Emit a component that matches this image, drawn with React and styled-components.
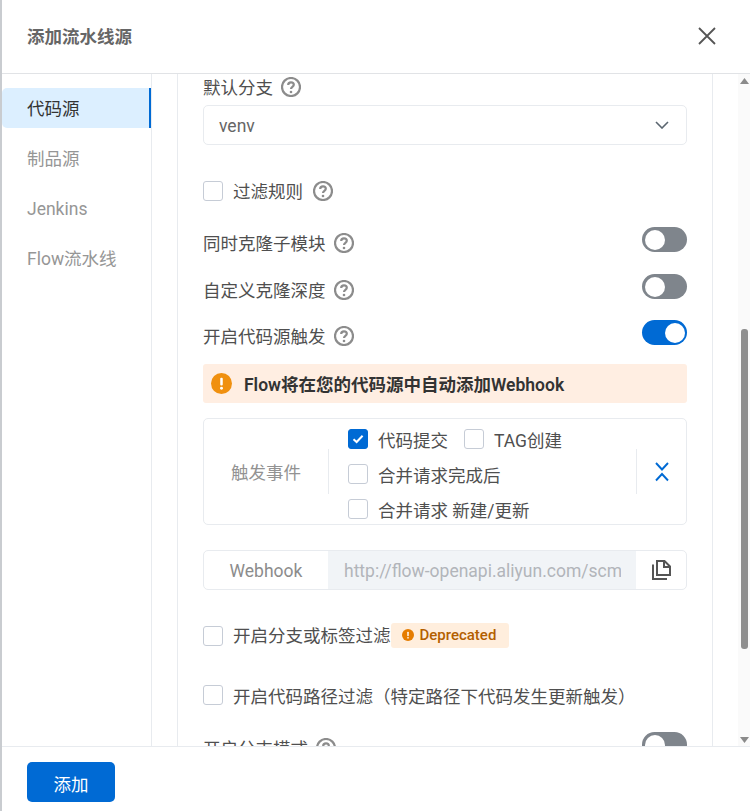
import React from "react";
import styled, { createGlobalStyle } from "styled-components";

const Global = createGlobalStyle`
  html, body { margin: 0; padding: 0; background: #fff; }
  body { font-family: Roboto, "Noto Sans CJK SC", sans-serif; font-size: 17.5px; color: #4f4f4f; }
  * { box-sizing: border-box; }
`;

const Page = styled.div`
  width: 750px; height: 811px; overflow: hidden; display: flex; flex-direction: column;
  border-left: 2px solid #c9ccd0; background: #fff;
`;
const Header = styled.header`
  flex: none; height: 74px; padding: 0 34px 1px 25px; border-bottom: 1px solid #e1e3e6;
  display: flex; align-items: center; justify-content: space-between;
`;
const Title = styled.h1`
  margin: 0; padding-top: 2px; font-size: 17.5px; line-height: 26px; font-weight: 700; color: #666;
`;
const Main = styled.div`flex: 1; min-height: 0; display: flex;`;
const Sidebar = styled.nav`
  flex: none; width: 150px; padding-top: 14px; border-right: 1px solid #e8ebef;
  display: flex; flex-direction: column; gap: 10px;
`;
const NavItem = styled.div`
  height: 40px; line-height: 42px; padding-left: 25px; border-radius: 5px 0 0 5px;
  color: ${p => (p.$active ? "#333" : "#969696")};
  background: ${p => (p.$active ? "#dcefff" : "transparent")};
  border-right: 2px solid ${p => (p.$active ? "#006ad4" : "transparent")};
`;
const Panel = styled.div`
  flex: none; width: 536px; margin: 0 25px; padding: 0 25px; overflow: hidden;
  border-left: 1px solid #e8ebef; border-right: 1px solid #e8ebef;
`;
const Scrollbar = styled.div`
  flex: none; width: 12px; background: #fafafa; padding: 4px 0 3px 0;
  display: flex; flex-direction: column; align-items: center;
`;
const Arrow = styled.svg`display: block; flex: none; width: 9px; height: 6px; fill: #8a8a8a;`;
const Thumb = styled.div`
  flex: none; width: 7px; height: 320px; margin-top: 245px; margin-left: 1px; margin-bottom: auto;
  border-radius: 3px; background: #8f8f8f;
`;
const Row = styled.div`
  display: flex; align-items: center; justify-content: space-between;
  height: ${p => p.$h}px; margin-top: ${p => p.$top}px;
`;
const Inline = styled.div`
  display: flex; align-items: center;
  height: ${p => p.$h || 20}px; margin-top: ${p => p.$top}px;
`;
const Label = styled.div`
  display: flex; align-items: center; gap: 8px; height: 26px; white-space: nowrap;
  padding-top: ${p => p.$shift || 0}px; color: #4f4f4f;
`;
const Text = styled.span`display: block; padding-top: 2px; line-height: 24px;`;
const HelpSlot = styled.span`display: flex; flex: none; margin-left: 10px;`;
const Select = styled.div`
  height: 40px; margin-top: 5px; padding: 0 17px 0 15px; border: 1px solid #e8ebef; border-radius: 5px;
  display: flex; align-items: center; justify-content: space-between; color: #666;
`;
const Box = styled.span`
  flex: none; width: 20px; height: 20px; border-radius: 3px;
  border: 1px solid ${p => (p.$checked ? "#006ad4" : "#c6ccd6")};
  background: ${p => (p.$checked ? "#006ad4" : "#fff")};
  display: flex; align-items: center; justify-content: center;
`;
const CheckText = styled.span`
  margin-left: 10px; padding-top: ${p => p.$pt ?? 2}px; line-height: 24px; white-space: nowrap; color: #4f4f4f;
`;
const Switch = styled.span`
  flex: none; width: 45px; height: 25px; border-radius: 13px; padding: 2.5px;
  background: ${p => (p.$on ? "#006ad4" : "#7f858c")};
  display: flex; justify-content: ${p => (p.$on ? "flex-end" : "flex-start")};
`;
const Knob = styled.span`width: 20px; height: 20px; border-radius: 50%; background: #fff;`;
const Alert = styled.div`
  height: 39px; margin-top: 19px; padding: 0 8px; border-radius: 3px; background: #ffeee2;
  display: flex; align-items: center; gap: 12px; color: #333; font-weight: 600;
`;
const Trigger = styled.div`
  height: 107px; margin-top: 15px; border: 1px solid #e8ebef; border-radius: 5px; display: flex;
`;
const TriggerLabel = styled.div`
  flex: none; width: 125px; height: 45px; align-self: center; border-right: 1px solid #e8ebef;
  display: flex; align-items: center; justify-content: center; color: #929292;
`;
const Options = styled.div`
  flex: 1; padding: 10px 0 0 19px; display: flex; flex-direction: column; gap: 15px;
`;
const OptionRow = styled.div`display: flex; align-items: center; height: 20px; gap: 16px;`;
const Option = styled.div`display: flex; align-items: center;`;
const Expand = styled.div`
  flex: none; width: 50px; height: 45px; align-self: center; border-left: 1px solid #e8ebef;
  display: flex; align-items: center; justify-content: center;
`;
const Group = styled.div`
  height: 40px; margin-top: 25px; border: 1px solid #e8ebef; border-radius: 5px; display: flex; overflow: hidden;
`;
const GroupLabel = styled.div`
  flex: none; width: 124px; display: flex; align-items: center; justify-content: center; color: #8c8c8c;
`;
const GroupInput = styled.div`
  flex: none; width: 308px; padding: 0 15px 0 16px; background: #f1f4f7; display: flex; align-items: center;
`;
const Url = styled.span`
  display: block; width: 100%; padding-top: 2px; overflow: hidden; white-space: nowrap; color: #b2b5ba;
`;
const GroupAction = styled.div`flex: 1; display: flex; align-items: center; justify-content: center;`;
const Badge = styled.span`
  flex: none; height: 25px; width: 118px; padding: 0 0 1px 11px; border-radius: 3px; background: #ffeedd; color: #b35f00;
  display: flex; align-items: center; gap: 6px; font-size: 15px; font-weight: 500;
`;
const Footer = styled.footer`
  flex: none; height: 65px; padding: 15px 25px 0; border-top: 1px solid #e8ebef; background: #fff;
`;
const Primary = styled.button`
  display: block; width: 88px; height: 40px; padding: 2px 0 0; border: 0; border-radius: 5px; background: #006ad4; color: #fff;
  font: inherit;
`;

const Help = () => (
  <svg width="20" height="20" viewBox="0 0 20 20" fill="none" style={{ flex: "none" }}>
    <circle cx="10" cy="10" r="9" stroke="#8c8c8c" strokeWidth="2.2" />
    <path d="M7.2 7.9c0-1.6 1.2-2.6 2.8-2.6s2.8 1 2.8 2.4c0 2.2-2.8 2.2-2.8 4.3" stroke="#8c8c8c" strokeWidth="2.2" />
    <circle cx="10" cy="15" r="1.3" fill="#8c8c8c" />
  </svg>
);
const Check = ({ checked }) => (
  <Box $checked={checked}>
    {checked && (
      <svg width="12" height="10" viewBox="0 0 12 10" fill="none">
        <path d="M1.5 5.2 4.6 8l6-6.2" stroke="#fff" strokeWidth="2" />
      </svg>
    )}
  </Box>
);
const Warn = ({ size, color }) => (
  <svg width={size} height={size} viewBox="0 0 20 20" style={{ flex: "none" }}>
    <circle cx="10" cy="10" r="10" fill={color} />
    <rect x="8.8" y="4.5" width="2.4" height="7.5" rx="1" fill="#fff" />
    <circle cx="10" cy="14.6" r="1.4" fill="#fff" />
  </svg>
);
const ChevronDown = () => (
  <svg width="14" height="8" viewBox="0 0 14 8" fill="none">
    <path d="M1 1l6 6 6-6" stroke="#5b6670" strokeWidth="1.6" />
  </svg>
);
const ExpandIcon = () => (
  <svg width="14" height="20" viewBox="0 0 14 20" fill="none">
    <path d="M1 1l6 6.5L13 1M1 18.5 7 12l6 6.5" stroke="#006ad4" strokeWidth="1.9" />
  </svg>
);
const CopyIcon = () => (
  <svg width="19" height="20" viewBox="0 0 19 20" fill="none" stroke="#555" strokeWidth="2">
    <path d="M5 1h7.5L18 6.5V15H5z" />
    <path d="M12 1v6h6" />
    <path d="M1 4.5V19h14" />
  </svg>
);
const CloseIcon = () => (
  <svg width="18" height="18" viewBox="0 0 18 18" fill="none">
    <path d="M1 1l16 16M17 1 1 17" stroke="#555" strokeWidth="1.8" />
  </svg>
);

export default function App() {
  return (
    <Page>
      <Global />
      <Header>
        <Title>添加流水线源</Title>
        <CloseIcon />
      </Header>
      <Main>
        <Sidebar>
          <NavItem $active>代码源</NavItem>
          <NavItem>制品源</NavItem>
          <NavItem>Jenkins</NavItem>
          <NavItem>Flow流水线</NavItem>
        </Sidebar>
        <Panel>
          <Label><Text>默认分支</Text><Help /></Label>
          <Select><Text>venv</Text><ChevronDown /></Select>
          <Inline $top={36}>
            <Check />
            <CheckText $pt={1}>过滤规则</CheckText>
            <HelpSlot><Help /></HelpSlot>
          </Inline>
          <Row $h={25} $top={26}>
            <Label $shift={7}><Text>同时克隆子模块</Text><Help /></Label>
            <Switch><Knob /></Switch>
          </Row>
          <Row $h={25} $top={22}>
            <Label $shift={7}><Text>自定义克隆深度</Text><Help /></Label>
            <Switch><Knob /></Switch>
          </Row>
          <Row $h={25} $top={21}>
            <Label $shift={7}><Text>开启代码源触发</Text><Help /></Label>
            <Switch $on><Knob /></Switch>
          </Row>
          <Alert><Warn size={21} color="#f0900f" /><Text>Flow将在您的代码源中自动添加Webhook</Text></Alert>
          <Trigger>
            <TriggerLabel><Text>触发事件</Text></TriggerLabel>
            <Options>
              <OptionRow>
                <Option><Check checked /><CheckText $pt={4}>代码提交</CheckText></Option>
                <Option><Check /><CheckText $pt={4}>TAG创建</CheckText></Option>
              </OptionRow>
              <OptionRow><Option><Check /><CheckText $pt={4}>合并请求完成后</CheckText></Option></OptionRow>
              <OptionRow><Option><Check /><CheckText $pt={4}>合并请求 新建/更新</CheckText></Option></OptionRow>
            </Options>
            <Expand><ExpandIcon /></Expand>
          </Trigger>
          <Group>
            <GroupLabel><Text>Webhook</Text></GroupLabel>
            <GroupInput><Url>http://flow-openapi.aliyun.com/scm/webhook/x7f2k</Url></GroupInput>
            <GroupAction><CopyIcon /></GroupAction>
          </Group>
          <Inline $h={25} $top={33}>
            <Check />
            <CheckText $pt={0}>开启分支或标签过滤</CheckText>
            <Badge><Warn size={12} color="#e57c00" />Deprecated</Badge>
          </Inline>
          <Inline $top={37}>
            <Check />
            <CheckText $pt={4}>开启代码路径过滤（特定路径下代码发生更新触发）</CheckText>
          </Inline>
          <Row $h={25} $top={27}>
            <Label $shift={7}><Text>开启分支模式</Text><Help /></Label>
            <Switch><Knob /></Switch>
          </Row>
        </Panel>
        <Scrollbar>
          <Arrow viewBox="0 0 9 6"><path d="M4.5 0 9 6H0z" /></Arrow>
          <Thumb />
          <Arrow viewBox="0 0 9 6"><path d="M0 0h9L4.5 6z" /></Arrow>
        </Scrollbar>
      </Main>
      <Footer><Primary>添加</Primary></Footer>
    </Page>
  );
}
